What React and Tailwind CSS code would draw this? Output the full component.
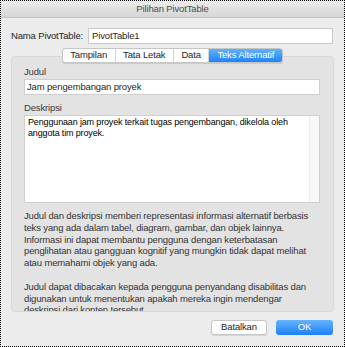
export default function App() {
  const font = { fontFamily: '"Liberation Sans", Arial, sans-serif' };
  const tabs = ['Tampilan', 'Tata Letak', 'Data', 'Teks Alternatif'];

  return (
    <div className="w-[345px] h-[347px] border border-dotted border-black bg-[#ececec] flex flex-col overflow-hidden text-[#262626] text-[9.5px] tracking-[-0.15px]" style={font}>
      {/* title bar */}
      <div className="h-[17px] shrink-0 flex items-center justify-center bg-gradient-to-b from-[#ececec] to-[#d6d6d6] border-b border-[#c4c4c4] text-[#4d4d4d]">
        Pilihan PivotTable
      </div>

      <div className="flex items-center mt-[10px] pl-[10px] pr-[11px] shrink-0">
        <span className="w-[77px] whitespace-nowrap">Nama PivotTable:</span>
        <div className="flex-1 h-[16px] bg-white border border-[#c9c9c9] flex items-center px-[3px]">PivotTable1</div>
      </div>

      <div className="flex flex-col mt-[4px] mx-[10px] shrink-0">
        <div className="relative z-10 self-center flex h-[15px] -mb-[7px] rounded-[3px] border border-[#c6c6c6] bg-white shadow-[0_1px_1px_rgba(0,0,0,0.12)] overflow-hidden">
          {tabs.map((t, i) => (
            <div
              key={t}
              className={
                i === 3
                  ? 'px-[8px] flex items-center bg-gradient-to-b from-[#5fb2fd] to-[#1d82f8] text-white'
                  : 'px-[7.5px] flex items-center border-r border-[#d3d3d3]'
              }
            >
              {t}
            </div>
          ))}
        </div>

        <div className="h-[256px] rounded-[4px] bg-[#e3e3e3] border border-[#d8d8d8] overflow-hidden pt-[9px] px-[12px] flex flex-col">
          <span className="shrink-0 text-[#3a3a3a] leading-[12px]">Judul</span>
          <div className="shrink-0 mt-[1px] h-[16px] bg-white border border-[#cfcfcf] flex items-center px-[2px] mr-[1px]">
            Jam pengembangan proyek
          </div>
          <span className="shrink-0 mt-[7px] text-[#3a3a3a] leading-[12px]">Deskripsi</span>
          <div className="shrink-0 mt-[1px] h-[88px] bg-white border border-[#cfcfcf] flex mr-[1px]">
            <div className="flex-1 px-[3px] pt-[1px] text-[9px] leading-[11px] text-black">
              Penggunaan jam proyek terkait tugas pengembangan, dikelola oleh<br />anggota tim proyek.
            </div>
            <div className="w-[10px] bg-[#f8f8f8] border-l border-[#ececec]"></div>
          </div>
          <div className="shrink-0 mt-[7px] leading-[11.75px] text-[#333] pr-[4px]">
            <p>
              Judul dan deskripsi memberi representasi informasi alternatif berbasis teks yang ada dalam tabel, diagram, gambar, dan objek lainnya. Informasi ini dapat membantu pengguna dengan keterbatasan penglihatan atau gangguan kognitif yang mungkin tidak dapat melihat atau memahami objek yang ada.
            </p>
            <p className="mt-[12px]">
              Judul dapat dibacakan kepada pengguna penyandang disabilitas dan digunakan untuk menentukan apakah mereka ingin mendengar deskripsi dari konten tersebut.
            </p>
          </div>
        </div>
      </div>

      <div className="flex justify-end gap-[9px] mt-[8px] pr-[11px] shrink-0">
        <button className="w-[56px] h-[15px] rounded-[3px] bg-white border border-[#c6c6c6] shadow-[0_1px_1px_rgba(0,0,0,0.1)] flex items-center justify-center">
          Batalkan
        </button>
        <button className="w-[57px] h-[15px] rounded-[3px] bg-gradient-to-b from-[#62b3fd] to-[#1b80f7] text-white flex items-center justify-center">
          OK
        </button>
      </div>
    </div>
  );
}
